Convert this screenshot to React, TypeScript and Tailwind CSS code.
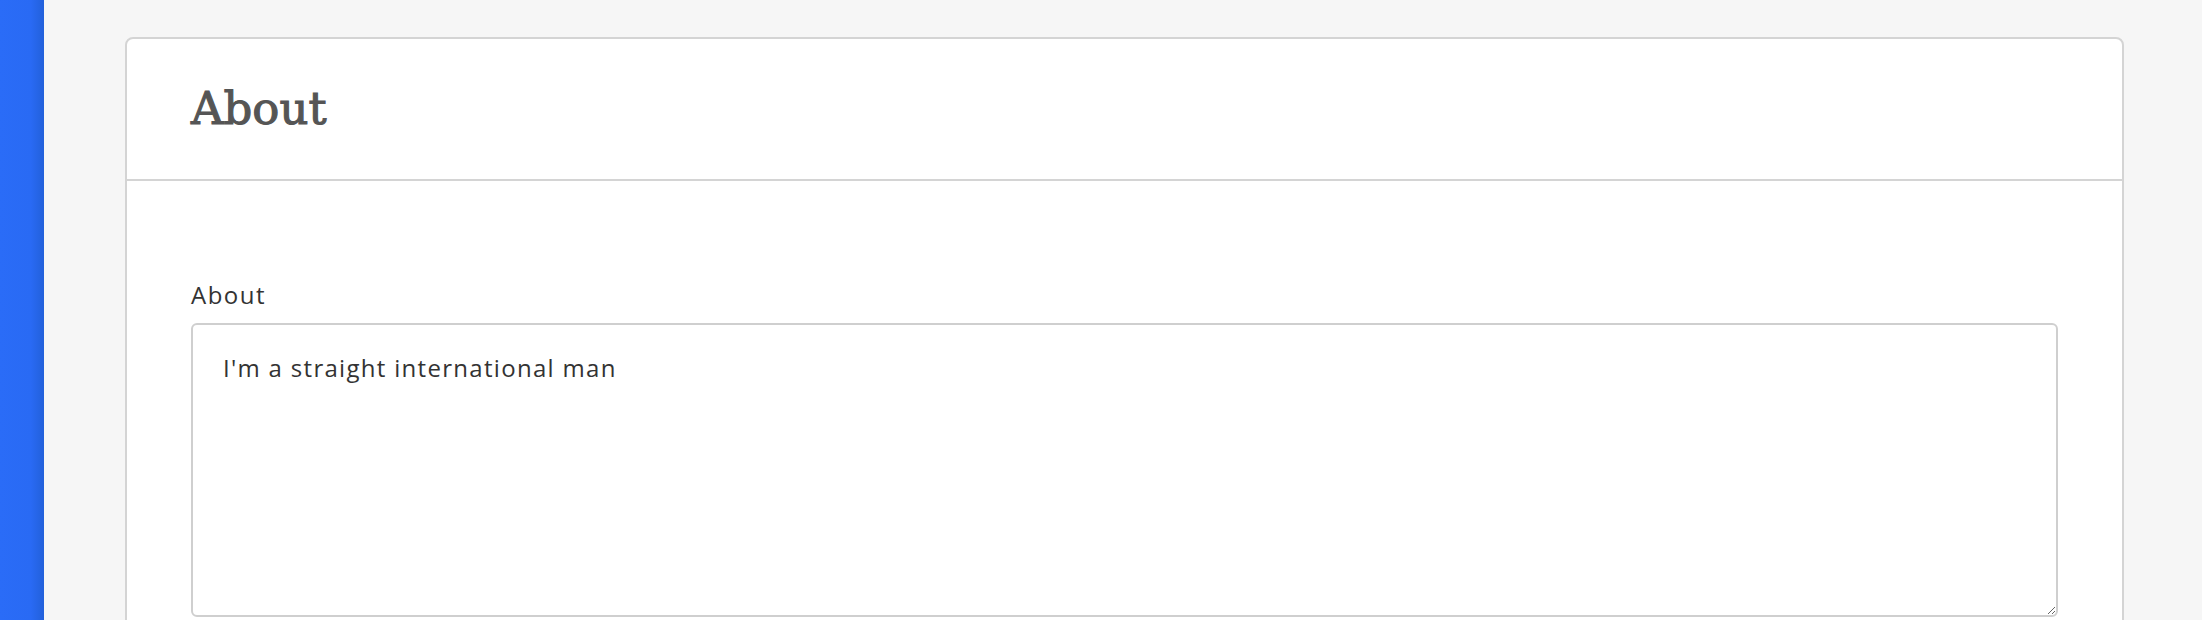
import React, { useState } from 'react';

export default function App() {
  const [about, setAbout] = useState("I'm a straight international man");

  return (
    <div className="flex h-[620px] w-full overflow-hidden bg-[#f6f6f6]">
      {/* Sidebar strip */}
      <div className="w-[44px] shrink-0 bg-[linear-gradient(to_right,#2a6cf7_0%,#296af4_70%,#2260da_100%)]" />

      <div className="flex-1 pl-[81px] pr-[78px] pt-[37px]">
        <div className="rounded-t-[8px] border-2 border-[#d4d4d4] bg-white">
          {/* Header */}
          <div className="flex h-[142px] items-center border-b-2 border-[#d4d4d4] px-[64px] pb-[2px]">
            <h1 className="text-[45px] font-normal leading-none text-[#555555] [-webkit-text-stroke:1.1px_#555555] [font-family:'DejaVu_Serif',serif]">
              About
            </h1>
          </div>

          {/* Body */}
          <div className="px-[64px] pt-[98px] pb-[40px] [font-family:'Open_Sans',sans-serif]">
            <label className="mb-[12px] block text-[24px] leading-[32px] tracking-[1.5px] text-[#333333]">About</label>
            <textarea
              value={about}
              onChange={(e) => setAbout(e.target.value)}
              className="block h-[294px] w-full resize rounded-[6px] border-2 border-[#cfcfcf] px-[30px] pt-[27px] pb-[24px] text-[24px] leading-[32px] tracking-[1.3px] text-[#333333] outline-none"
            />
          </div>
        </div>
      </div>
    </div>
  );
}
